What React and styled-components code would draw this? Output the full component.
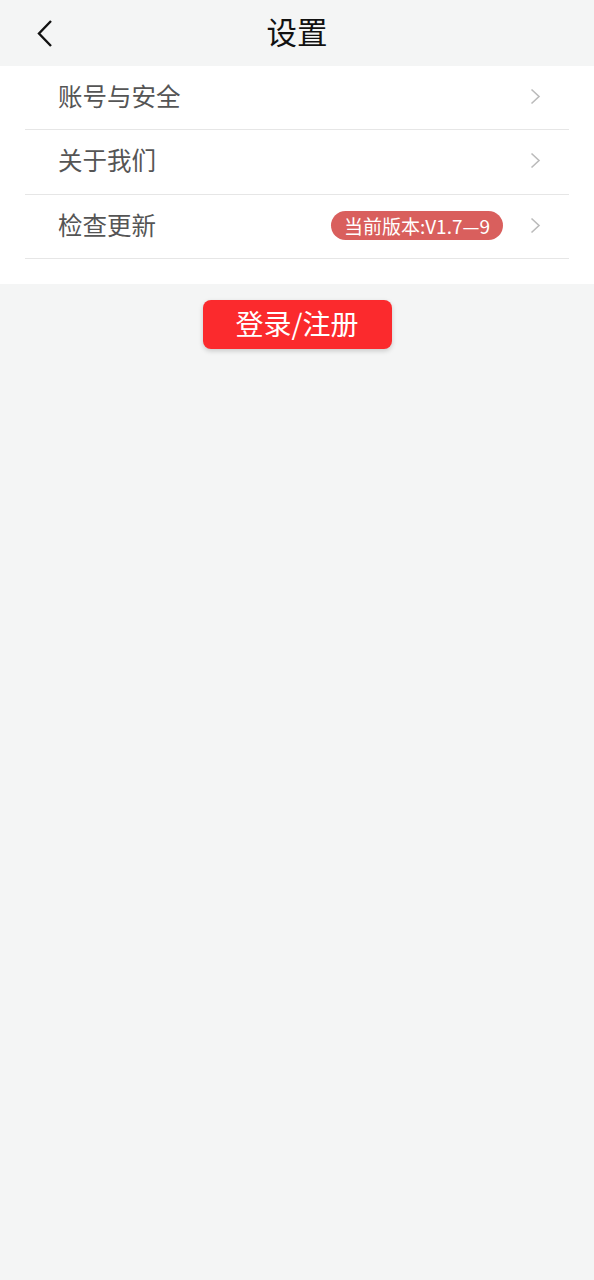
import styled, { createGlobalStyle } from 'styled-components'

const GlobalStyle = createGlobalStyle`
    html, body {
        margin: 0;
        padding: 0;
        background: #f4f5f5;
        font-family: "Noto Sans CJK SC", "Noto Sans", sans-serif;
    }
`

const Page = styled.div`
    min-height: 1280px;
    background: #f4f5f5;
`

const Header = styled.div`
    height: 66px;
    position: relative;
    display: flex;
    align-items: center;
    justify-content: center;
    padding-bottom: 4px;
    box-sizing: border-box;
`

const BackButton = styled.button`
    position: absolute;
    left: 30px;
    top: 16px;
    width: 30px;
    height: 34px;
    padding: 0;
    border: none;
    background: none;
    display: flex;
    align-items: center;
    justify-content: center;
`

const Title = styled.h1`
    margin: 0;
    font-size: 30.5px;
    font-weight: 400;
    color: #111;
    line-height: 1;
`

const List = styled.div`
    background: #fff;
    padding: 0 25px 25px;
`

const Row = styled.div`
    height: 64px;
    box-sizing: border-box;
    display: flex;
    align-items: center;
    border-bottom: 1px solid #e6e6e6;
    padding: 0 28px 3px 33px;

    &:nth-child(2) {
        height: 65px;
    }
`

const Label = styled.span`
    flex: 1;
    font-size: 24.5px;
    color: #555;
    line-height: 1;
`

const Badge = styled.span`
    height: 29px;
    padding: 0 13px;
    border-radius: 15px;
    background: #d95f5d;
    color: #fff;
    font-size: 19px;
    line-height: 29px;
    margin-right: 26px;
    white-space: nowrap;
`

const ButtonWrap = styled.div`
    display: flex;
    justify-content: center;
    padding-top: 16px;
`

const LoginButton = styled.button`
    width: 189px;
    height: 49px;
    padding: 0 0 3px;
    border: none;
    border-radius: 8px;
    background: #fb2a2d;
    color: #fff;
    font-family: "Noto Sans CJK SC", "Noto Sans", sans-serif;
    font-size: 28px;
    box-shadow: 0 2px 5px rgba(0, 0, 0, 0.18);
`

function Chevron() {
    return (
        <svg width="12" height="17" viewBox="0 0 12 17">
            <path d="M2.5 1.5 L10 8.5 L2.5 15.5" fill="none" stroke="#bbb" strokeWidth="1.6" />
        </svg>
    )
}

const items = [
    { label: '账号与安全' },
    { label: '关于我们' },
    { label: '检查更新', badge: '当前版本:V1.7—9' },
]

export default function App() {
    return (
        <Page>
            <GlobalStyle />
            <Header>
                <BackButton>
                    <svg width="18" height="29" viewBox="0 0 18 29">
                        <path d="M15 2 L3 14.5 L15 27" fill="none" stroke="#111" strokeWidth="2.4" />
                    </svg>
                </BackButton>
                <Title>设置</Title>
            </Header>
            <List>
                {items.map((item) => (
                    <Row key={item.label}>
                        <Label>{item.label}</Label>
                        {item.badge && <Badge>{item.badge}</Badge>}
                        <Chevron />
                    </Row>
                ))}
            </List>
            <ButtonWrap>
                <LoginButton>登录/注册</LoginButton>
            </ButtonWrap>
        </Page>
    )
}
